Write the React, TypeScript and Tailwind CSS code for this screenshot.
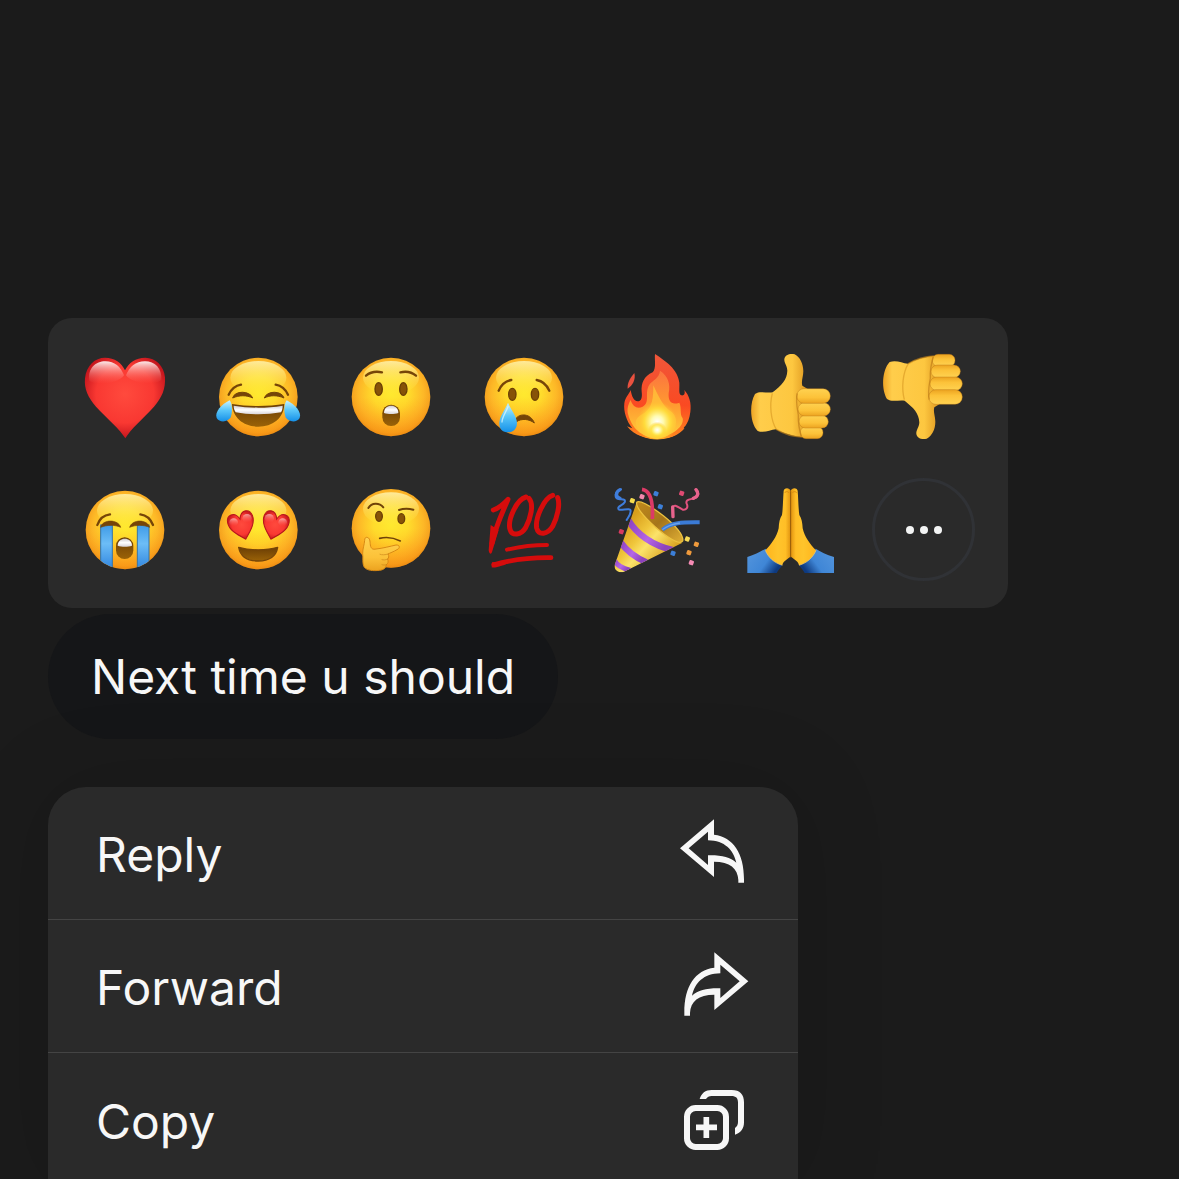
import type { ReactNode } from "react";

type Reaction = { label: string; view: string; art: ReactNode };
type MenuItem = { label: string; view: string; icon: ReactNode };

// Gradients and clips shared by all the emoji drawings
function EmojiDefs() {
  return (
    <svg className="absolute h-0 w-0" aria-hidden="true">
      <defs>
        <radialGradient id="face" cx="0.5" cy="0.46" r="0.55">
          <stop offset="0" stopColor="#ffe92f" />
          <stop offset="0.4" stopColor="#ffdc2c" />
          <stop offset="0.75" stopColor="#fdb827" />
          <stop offset="0.9" stopColor="#f6a41f" />
          <stop offset="1" stopColor="#d98212" />
        </radialGradient>
        <linearGradient id="faceShade" x1="0" y1="0" x2="0" y2="1">
          <stop offset="0.5" stopColor="#ff9a1a" stopOpacity="0" />
          <stop offset="1" stopColor="#fb8f10" stopOpacity="0.55" />
        </linearGradient>
        <linearGradient id="shine" x1="0" y1="0" x2="0" y2="1">
          <stop offset="0" stopColor="#fff7b8" stopOpacity="0.8" />
          <stop offset="1" stopColor="#fff04a" stopOpacity="0" />
        </linearGradient>
        <linearGradient id="mouth" x1="0" y1="0" x2="0" y2="1">
          <stop offset="0" stopColor="#6b3e05" />
          <stop offset="1" stopColor="#9a6207" />
        </linearGradient>
        <linearGradient id="teeth" x1="0" y1="0" x2="0" y2="1">
          <stop offset="0" stopColor="#cfcbd0" />
          <stop offset="0.5" stopColor="#ffffff" />
          <stop offset="1" stopColor="#d9d5da" />
        </linearGradient>
        <linearGradient id="tear" x1="0" y1="0" x2="0" y2="1">
          <stop offset="0" stopColor="#c9f3ff" />
          <stop offset="0.45" stopColor="#5cc8fa" />
          <stop offset="1" stopColor="#1590e8" />
        </linearGradient>
        <linearGradient id="stream" x1="0" y1="0" x2="0" y2="1">
          <stop offset="0" stopColor="#3f9be6" />
          <stop offset="0.4" stopColor="#6cbdf7" />
          <stop offset="1" stopColor="#2b80dc" />
        </linearGradient>
        <radialGradient id="heart" cx="0.5" cy="0.45" r="0.6">
          <stop offset="0" stopColor="#ff4a3d" />
          <stop offset="0.6" stopColor="#f93832" />
          <stop offset="1" stopColor="#b80d18" />
        </radialGradient>
        <linearGradient id="heartShine" x1="0" y1="0" x2="0" y2="1">
          <stop offset="0" stopColor="#ffffff" stopOpacity="0.9" />
          <stop offset="1" stopColor="#ff6a60" stopOpacity="0" />
        </linearGradient>
        <linearGradient id="flame" x1="0" y1="0" x2="0" y2="1">
          <stop offset="0" stopColor="#f0563a" />
          <stop offset="0.6" stopColor="#fa4a22" />
          <stop offset="1" stopColor="#ff8a1e" />
        </linearGradient>
        <linearGradient id="flameInner" x1="0" y1="0" x2="0" y2="1">
          <stop offset="0" stopColor="#fb7440" />
          <stop offset="0.5" stopColor="#ff9a30" />
          <stop offset="1" stopColor="#ffcf3a" />
        </linearGradient>
        <radialGradient id="glow">
          <stop offset="0" stopColor="#ffffff" />
          <stop offset="0.3" stopColor="#fffbb0" />
          <stop offset="0.65" stopColor="#ffe23e" stopOpacity="0.8" />
          <stop offset="1" stopColor="#ffc52e" stopOpacity="0" />
        </radialGradient>
        <linearGradient id="skin" x1="0" y1="0" x2="0" y2="1">
          <stop offset="0" stopColor="#ffd251" />
          <stop offset="0.6" stopColor="#fcc239" />
          <stop offset="1" stopColor="#eca320" />
        </linearGradient>
        <linearGradient id="palm" x1="0" y1="0" x2="1" y2="0">
          <stop offset="0" stopColor="#eea526" />
          <stop offset="0.15" stopColor="#ffcd4b" />
          <stop offset="0.7" stopColor="#fdc740" />
          <stop offset="1" stopColor="#d98f1a" />
        </linearGradient>
        <linearGradient id="prayHand" x1="0" y1="0" x2="1" y2="0">
          <stop offset="0" stopColor="#ffb41c" />
          <stop offset="0.5" stopColor="#ffc42b" />
          <stop offset="0.8" stopColor="#ffbe26" />
          <stop offset="1" stopColor="#e0920f" />
        </linearGradient>
        <linearGradient id="sleeve" x1="0" y1="0" x2="1" y2="0.5">
          <stop offset="0" stopColor="#5596dd" />
          <stop offset="0.65" stopColor="#3f86d6" />
          <stop offset="1" stopColor="#0e3a80" />
        </linearGradient>
        <linearGradient id="cone" x1="0.2" y1="0.3" x2="0.75" y2="0.8">
          <stop offset="0" stopColor="#d89f1c" />
          <stop offset="0.35" stopColor="#f0c63c" />
          <stop offset="0.55" stopColor="#fbe36a" />
          <stop offset="1" stopColor="#d9a01d" />
        </linearGradient>
        <linearGradient id="coneMouth" x1="0" y1="0" x2="1" y2="1">
          <stop offset="0" stopColor="#c08a1c" />
          <stop offset="0.5" stopColor="#a5751a" />
          <stop offset="1" stopColor="#e0af35" />
        </linearGradient>
        <linearGradient id="stripe" x1="0" y1="0" x2="1" y2="0.5">
          <stop offset="0" stopColor="#8a3fc0" />
          <stop offset="0.6" stopColor="#b566e6" />
          <stop offset="1" stopColor="#8d43bd" />
        </linearGradient>
        <clipPath id="sobClip">
          <circle cx="165" cy="165" r="118" />
        </clipPath>
        <clipPath id="coneClip">
          <path d="M110 82 L44 270 C41 286 58 296 72 290 L246 204 C222 200 140 140 110 82 Z" />
        </clipPath>
        <clipPath id="flameClip">
          <path d="M60 40 H290 V259 C238 285 205 299 172 299 C140 299 103 286 60 259 Z" />
        </clipPath>
      </defs>
    </svg>
  );
}

function Face({ cx, cy }: { cx: number; cy: number }) {
  return (
    <>
      <circle cx={cx} cy={cy} r={118} fill="url(#face)" />
      <circle cx={cx} cy={cy} r={118} fill="url(#faceShade)" />
      <ellipse cx={cx} cy={cy - 58} rx={84} ry={50} fill="url(#shine)" />
    </>
  );
}

const thumb = (
  <>
    <path
      d="M465 162 C478 152 500 160 518 157 C545 135 561 120 562 92 C562 77 552 70 553 57 C556 43 570 40 584 43 C600 51 610 72 610 93 C610 110 603 124 607 137 L628 150 L630 285 L605 291 C580 289 550 280 528 268 C510 270 492 280 473 273 C449 248 448 190 465 162 Z"
      fill="url(#palm)"
    />
    <path d="M517 160 C508 195 512 240 529 268" fill="none" stroke="#c98414" strokeWidth="4" opacity="0.45" />
    <path d="M529 268 C550 281 580 290 606 291" fill="none" stroke="#d08a16" strokeWidth="4" opacity="0.6" />
    <g fill="url(#skin)" stroke="#b87413" strokeWidth="2" strokeOpacity="0.6">
      <rect x="601" y="260" width="68" height="36" rx="17" />
      <rect x="597" y="226" width="88" height="38" rx="19" />
      <rect x="594" y="188" width="97" height="40" rx="20" />
      <rect x="590" y="146" width="101" height="44" rx="22" />
    </g>
    <path d="M592 160 C586 185 592 205 595 225 C594 250 598 270 604 288" fill="none" stroke="#b06c10" strokeWidth="4" opacity="0.5" />
  </>
);

const smallHeart = "M0 28 C-26 8 -42 -6 -40 -24 C-38 -43 -10 -48 0 -24 C10 -48 38 -43 40 -24 C42 -6 26 8 0 28 Z";

const confetti = [
  { x: 97, y: 77, fill: "#f5dc4e" },
  { x: 126, y: 65, fill: "#f387ad" },
  { x: 168, y: 56, fill: "#3c7fd8" },
  { x: 181, y: 95, fill: "#3c7fd8" },
  { x: 245, y: 55, fill: "#e04a72" },
  { x: 64, y: 170, fill: "#d63a5f" },
  { x: 262, y: 192, fill: "#f7dc58" },
  { x: 289, y: 208, fill: "#ef9a3c" },
  { x: 267, y: 233, fill: "#ef9a3c" },
  { x: 219, y: 235, fill: "#3c7fd8" },
  { x: 274, y: 263, fill: "#f58bb4" },
];

const reactions: Reaction[] = [
  {
    label: "Love",
    view: "12 15 309 309",
    art: (
      <>
        <path
          d="M166 295 C150 268 112 236 78 200 C54 172 42 148 45 115 C49 76 75 53 105 53 C134 53 155 68 165 91 C176 68 197 53 226 53 C257 53 282 78 285 112 C287 148 276 172 252 200 C219 236 181 268 166 295 Z"
          fill="url(#heart)"
        />
        <path d="M58 122 C52 84 78 64 106 64 C134 64 152 80 162 106 C150 128 80 140 58 122 Z" fill="url(#heartShine)" />
        <path d="M168 106 C178 80 197 64 225 64 C254 64 276 84 274 120 C250 140 182 128 168 106 Z" fill="url(#heartShine)" />
      </>
    ),
  },
  {
    label: "Laugh",
    view: "411 15 309 309",
    art: (
      <>
        <Face cx={565} cy={171} />
        <g fill="none" stroke="#764508" strokeWidth="7" strokeLinecap="round">
          <path d="M476 164 C484 147 496 137 513 134" />
          <path d="M617 134 C634 137 646 147 654 164" />
        </g>
        <path d="M488 174 C493 151 540 151 548 174 C530 165 508 165 488 174 Z" fill="#764508" stroke="#764508" strokeWidth="3" strokeLinejoin="round" />
        <path d="M583 174 C590 151 636 151 642 174 C622 165 600 165 583 174 Z" fill="#764508" stroke="#764508" strokeWidth="3" strokeLinejoin="round" />
        <path d="M486 192 C535 200 595 200 643 192 C642 235 607 260 565 260 C523 260 488 235 486 192 Z" fill="url(#mouth)" />
        <path d="M491 197 C540 205 590 205 638 197 C638 205 636 212 633 217 C590 225 540 225 497 217 C493 211 491 204 491 197 Z" fill="url(#teeth)" />
        <path d="M479 181 C487 190 488 218 482 232 C474 247 448 249 440 234 C433 216 455 193 479 181 Z" fill="url(#tear)" />
        <path d="M650 181 C642 190 641 218 647 232 C655 247 681 249 689 234 C696 216 674 193 650 181 Z" fill="url(#tear)" />
      </>
    ),
  },
  {
    label: "Surprised",
    view: "0 15 309 309",
    art: (
      <>
        <Face cx={153} cy={171} />
        <g fill="none" stroke="#764508" strokeWidth="7" strokeLinecap="round">
          <path d="M78 107 C91 96 108 93 126 97" />
          <path d="M181 97 C198 93 215 96 228 107" />
        </g>
        <g fill="#875308" stroke="#6b3f05" strokeWidth="4">
          <ellipse cx="116" cy="147" rx="11" ry="19" />
          <ellipse cx="190" cy="147" rx="11" ry="19" />
        </g>
        <rect x="127" y="194" width="53" height="64" rx="26" fill="url(#mouth)" />
        <path d="M132 219 C132 190 175 190 175 219 C163 223 144 223 132 219 Z" fill="url(#teeth)" />
      </>
    ),
  },
  {
    label: "Sad",
    view: "399 15 309 309",
    art: (
      <>
        <Face cx={552} cy={171} />
        <g fill="none" stroke="#764508" strokeWidth="7" strokeLinecap="round">
          <path d="M476 152 C484 134 497 123 514 120" />
          <path d="M590 120 C607 123 620 134 628 152" />
        </g>
        <g fill="#875308" stroke="#6b3f05" strokeWidth="4">
          <ellipse cx="517" cy="163" rx="11" ry="18" />
          <ellipse cx="585" cy="163" rx="11" ry="18" />
        </g>
        <path d="M527 236 C540 219 572 220 583 249 C568 237 545 234 528 246 Z" fill="#764508" stroke="#764508" strokeWidth="3" strokeLinejoin="round" />
        <path d="M504 188 C512 208 530 228 531 248 C531 267 519 277 504 277 C489 277 477 267 478 248 C479 228 496 208 504 188 Z" fill="url(#tear)" />
        <path d="M504 200 C497 218 486 232 486 246" fill="none" stroke="#e3f9ff" strokeWidth="4" strokeLinecap="round" opacity="0.7" />
      </>
    ),
  },
  {
    label: "Fire",
    view: "18 15 309 309",
    art: (
      <g clipPath="url(#flameClip)">
        <path
          d="M165 42 C195 62 234 88 238 128 C239 148 235 162 244 166 C253 168 257 158 252 149 C268 165 275 190 271 216 C269 236 262 250 256 258 C252 262 248 266 254 265 C236 287 205 299 172 299 C140 299 103 286 81 259 L97 265 C80 245 70 215 73 190 C76 170 88 162 92 150 C95 168 101 183 113 184 C125 184 127 170 125 155 C123 130 132 108 158 97 C170 85 163 60 165 42 Z"
          fill="url(#flame)"
        />
        <path d="M103 99 C108 118 98 136 83 146 C81 128 92 112 103 99 Z" fill="#e9513f" />
        <path
          d="M180 92 C204 108 212 132 206 160 C204 185 215 196 238 188 C246 205 238 220 248 235 C252 252 235 280 172 297 C120 290 95 262 84 222 C80 205 86 190 92 180 C98 200 112 208 128 200 C152 186 132 160 148 134 C158 120 178 115 180 92 Z"
          fill="url(#flameInner)"
        />
        <path d="M160 136 C176 170 190 200 212 214 C226 224 232 240 226 262 C214 284 195 295 172 296 C142 294 118 280 108 255 C104 236 116 228 134 218 C158 202 160 170 160 136 Z" fill="#ffc53a" opacity="0.75" />
        <ellipse cx="172" cy="246" rx="60" ry="62" fill="url(#glow)" />
        <ellipse cx="172" cy="270" rx="28" ry="25" fill="url(#glow)" />
      </g>
    ),
  },
  { label: "Thumbs up", view: "417 15 309 309", art: thumb },
  {
    label: "Thumbs down",
    view: "36 15 309 309",
    art: <g transform="translate(-384 339) scale(1 -1)">{thumb}</g>,
  },
  {
    label: "Crying",
    view: "12 9 309 309",
    art: (
      <>
        <Face cx={165} cy={165} />
        <g clipPath="url(#sobClip)">
          <rect x="92" y="150" width="35" height="140" fill="url(#stream)" stroke="#3575a8" strokeWidth="3" />
          <rect x="202" y="150" width="35" height="140" fill="url(#stream)" stroke="#3575a8" strokeWidth="3" />
        </g>
        <g fill="none" stroke="#764508" strokeWidth="7" strokeLinecap="round">
          <path d="M82 150 C88 132 102 120 120 118" />
          <path d="M211 118 C228 120 242 132 249 150" />
        </g>
        <path d="M92 157 C97 132 145 132 152 157 C135 149 112 149 92 157 Z" fill="#764508" stroke="#764508" strokeWidth="2" strokeLinejoin="round" />
        <path d="M179 157 C186 132 232 132 239 157 C220 149 197 149 179 157 Z" fill="#764508" stroke="#764508" strokeWidth="2" strokeLinejoin="round" />
        <rect x="138" y="187" width="52" height="65" rx="26" fill="url(#mouth)" />
        <path d="M143 212 C143 184 186 184 186 212 C174 216 155 216 143 212 Z" fill="url(#teeth)" />
      </>
    ),
  },
  {
    label: "Heart eyes",
    view: "411 9 309 309",
    art: (
      <>
        <Face cx={565} cy={165} />
        <g fill="url(#heart)" stroke="#b5161c" strokeWidth="3">
          <path d={smallHeart} transform="translate(518 160) rotate(-16) scale(0.97 1.2)" />
          <path d={smallHeart} transform="translate(612 160) rotate(16) scale(0.97 1.2)" />
        </g>
        <g fill="url(#heartShine)" opacity="0.6">
          <ellipse cx="491" cy="142" rx="13" ry="12" />
          <ellipse cx="531" cy="130" rx="14" ry="13" />
          <ellipse cx="598" cy="130" rx="14" ry="13" />
          <ellipse cx="638" cy="142" rx="13" ry="12" />
        </g>
        <path d="M506 217 C540 227 590 227 623 217 C619 243 598 258 565 258 C532 258 511 243 506 217 Z" fill="url(#mouth)" stroke="#764508" strokeWidth="4" strokeLinejoin="round" />
      </>
    ),
  },
  {
    label: "Thinking",
    view: "0 9 309 309",
    art: (
      <>
        <Face cx={153} cy={160} />
        <g fill="none" stroke="#6f4208" strokeWidth="6" strokeLinecap="round">
          <path d="M85 99 C95 82 118 82 130 97" />
          <path d="M177 105 C190 100 206 100 220 104" />
          <path d="M119 190 C140 185 163 189 181 198" strokeWidth="5" />
        </g>
        <g fill="#875308" stroke="#6b3f05" strokeWidth="4">
          <ellipse cx="117" cy="124" rx="10" ry="15" />
          <ellipse cx="184" cy="131" rx="10" ry="15" />
        </g>
        <path
          d="M80 187 C90 188 90 198 91 210 C93 222 99 224 108 222 C128 220 150 214 168 210 C180 209 181 220 171 224 C161 230 150 234 144 237 C148 244 146 249 143 252 C146 260 144 266 139 269 C138 279 130 285 118 286 C100 288 82 287 73 277 C66 266 70 248 68 236 C68 220 73 210 74 196 C74 190 76 187 80 187 Z"
          fill="url(#skin)"
          stroke="#d98a14"
          strokeWidth="3"
        />
        <g fill="none" stroke="#c07512" strokeWidth="3" strokeLinecap="round" opacity="0.5">
          <path d="M144 237 C136 240 126 240 120 238" />
          <path d="M143 252 C136 256 130 255 126 254" />
          <path d="M139 269 C134 271 129 270 126 269" />
        </g>
      </>
    ),
  },
  {
    label: "Hundred",
    view: "399 9 309 309",
    art: (
      <>
        <g fill="none" stroke="#d60c0c" strokeLinecap="round" strokeLinejoin="round" strokeWidth="15">
          <path d="M460 105 C474 100 490 88 504 73 C489 108 464 162 456 205" />
          <path d="M558 66 C530 73 502 135 510 163 C516 184 543 181 557 158 C571 132 583 88 567 70" />
          <path d="M638 61 C612 69 585 130 590 159 C596 183 623 179 638 154 C652 127 661 88 653 68" />
          <path d="M501 224 C540 215 582 210 621 210" strokeWidth="12" />
          <path d="M461 269 C515 254 575 247 633 248" strokeWidth="14" />
        </g>
        <path d="M452 150 L446 226 C448 240 455 238 457 228 L476 165 Z" fill="#d60c0c" />
        <path d="M456 262 L455 277 C470 281 500 266 520 260 Z" fill="#d60c0c" />
      </>
    ),
  },
  {
    label: "Party",
    view: "18 9 309 309",
    art: (
      <>
        <g clipPath="url(#coneClip)">
          <rect x="40" y="75" width="215" height="220" fill="url(#cone)" />
          <g fill="none" stroke="url(#stripe)" strokeWidth="19">
            <path d="M84 134 C108 175 155 212 222 226" />
            <path d="M60 200 C80 228 105 248 140 262" />
            <path d="M40 252 C52 272 66 280 92 286" strokeWidth="15" />
          </g>
        </g>
        <path d="M111 81 C120 76 150 92 190 122 C228 152 252 182 248 198 C240 212 200 186 165 155 C130 124 104 92 111 81 Z" fill="url(#coneMouth)" stroke="#ecc23f" strokeWidth="4" />
        <path d="M126 43 C150 46 160 75 157 132" fill="none" stroke="#dc3a66" strokeWidth="11" />
        <path d="M187 164 C215 140 255 142 299 142" fill="none" stroke="#3b7bd6" strokeWidth="12" />
        <path d="M187 164 C205 150 225 146 240 144" fill="none" stroke="#6aa2ea" strokeWidth="4" />
        <g fill="none" strokeLinecap="round" strokeLinejoin="round">
          <path d="M63 43 C44 50 42 68 56 72 C68 74 78 72 74 82 C68 92 50 94 56 103 C64 108 92 96 92 108 C92 120 84 128 80 135" stroke="#3f7ddb" strokeWidth="6" />
          <path d="M60 44 C46 52 46 66 60 70" stroke="#3f7ddb" strokeWidth="10" />
          <path d="M287 43 C300 54 296 66 282 70 C266 74 256 74 260 86 C266 98 258 106 248 104 C236 98 222 84 218 98 L219 126" stroke="#e2527e" strokeWidth="6" />
          <path d="M288 44 C298 56 292 66 280 70 M218 96 L219 125" stroke="#e8638c" strokeWidth="10" />
        </g>
        {confetti.map((c) => (
          <rect key={`${c.x}-${c.y}`} x={c.x - 7} y={c.y - 7} width="14" height="14" rx="3" fill={c.fill} transform={`rotate(20 ${c.x} ${c.y})`} />
        ))}
      </>
    ),
  },
  {
    label: "Pray",
    view: "27 9 309 309",
    art: (
      <>
        {["", "translate(364 0) scale(-1 1)"].map((t) => (
          <g key={t} transform={t}>
            <path d="M52 246 C75 240 92 229 107 221 C115 242 130 262 158 269 C151 278 144 286 140 294 H52 Z" fill="url(#sleeve)" />
            <path d="M182 48 C179 38 165 36 161 47 C159 70 159 100 156 120 C149 130 147 142 146 160 C141 185 124 208 106 226 C114 246 132 264 157 271 C160 256 176 252 182 244 Z" fill="url(#prayHand)" />
            <path d="M106 226 C114 246 132 264 157 271" fill="none" stroke="#f5d27a" strokeWidth="3" opacity="0.6" />
            <path d="M164 54 C166 49 174 48 177 54" fill="none" stroke="#d88d14" strokeWidth="3" />
          </g>
        ))}
        <path d="M182 50 V246" stroke="#9a5d08" strokeWidth="3" strokeLinecap="round" />
      </>
    ),
  },
];

const replyArrow = (
  <path
    fillRule="evenodd"
    d="M60 145 L162 58 V104 C220 111 252 160 252 238 V248 H235 V240 C233 205 210 185 162 185 V231 Z M86 145 L144 195 V166 C185 165 210 172 229 188 C220 150 195 122 144 121 V95 Z"
  />
);

const menuItems: MenuItem[] = [
  { label: "Reply", view: "54 51 216 216", icon: replyArrow },
  {
    label: "Forward",
    view: "54 51 216 216",
    icon: <g transform="translate(325 0) scale(-1 1)">{replyArrow}</g>,
  },
  {
    label: "Copy",
    view: "54 132 216 216",
    icon: (
      <>
        <rect x="81" y="204" width="117" height="117" rx="26" fill="none" stroke="currentColor" strokeWidth="18" />
        <path d="M139 231 V294 M108 262 H171" stroke="currentColor" strokeWidth="17" />
        <path d="M119 177 C124 160 136 150 155 150 H215 C240 150 252 163 252 187 V247 C252 265 243 278 225 284 V264 C231 260 234 254 234 246 V188 C234 174 228 168 214 168 H155 C147 168 142 171 138 177 Z" />
      </>
    ),
  },
];

export default function App() {
  return (
    <main className="h-screen overflow-hidden bg-[#1b1b1b] px-12 pt-[318px] font-['Inter',sans-serif] text-[#f7f7f7]">
      <EmojiDefs />

      {/* Reaction picker */}
      <section aria-label="Reactions" className="flex w-full max-w-[960px] flex-wrap gap-[30px] rounded-3xl bg-[#2a2a2a] px-[26px] py-[27px]">
        {reactions.map((r) => (
          <button key={r.label} type="button" aria-label={r.label} className="size-[103px]">
            <svg viewBox={r.view} className="size-full" aria-hidden="true">{r.art}</svg>
          </button>
        ))}
        <button type="button" aria-label="More reactions" className="flex size-[103px] items-center justify-center gap-[6px] rounded-full border-3 border-[#303236]">
          <span className="size-2 rounded-full bg-[#f3f4f4]" />
          <span className="size-2 rounded-full bg-[#f3f4f4]" />
          <span className="size-2 rounded-full bg-[#f3f4f4]" />
        </button>
      </section>

      {/* Selected message */}
      <p className="mt-[6px] flex h-[125px] w-fit items-center rounded-full bg-[#151618] px-[43px] text-5xl">
        Next time u should
      </p>

      {/* Actions */}
      <nav aria-label="Message actions" className="mt-12 w-full max-w-[750px] divide-y divide-[#444444] overflow-hidden rounded-t-[38px] bg-[#2a2a2a] shadow-[0_0_90px_rgba(0,0,0,0.15)]">
        {menuItems.map((item) => (
          <button key={item.label} type="button" className="flex h-[133px] w-full items-center justify-between px-12 text-5xl">
            <span className="pt-1">{item.label}</span>
            <svg viewBox={item.view} className="size-[72px]" fill="currentColor" aria-hidden="true">{item.icon}</svg>
          </button>
        ))}
      </nav>
    </main>
  );
}
